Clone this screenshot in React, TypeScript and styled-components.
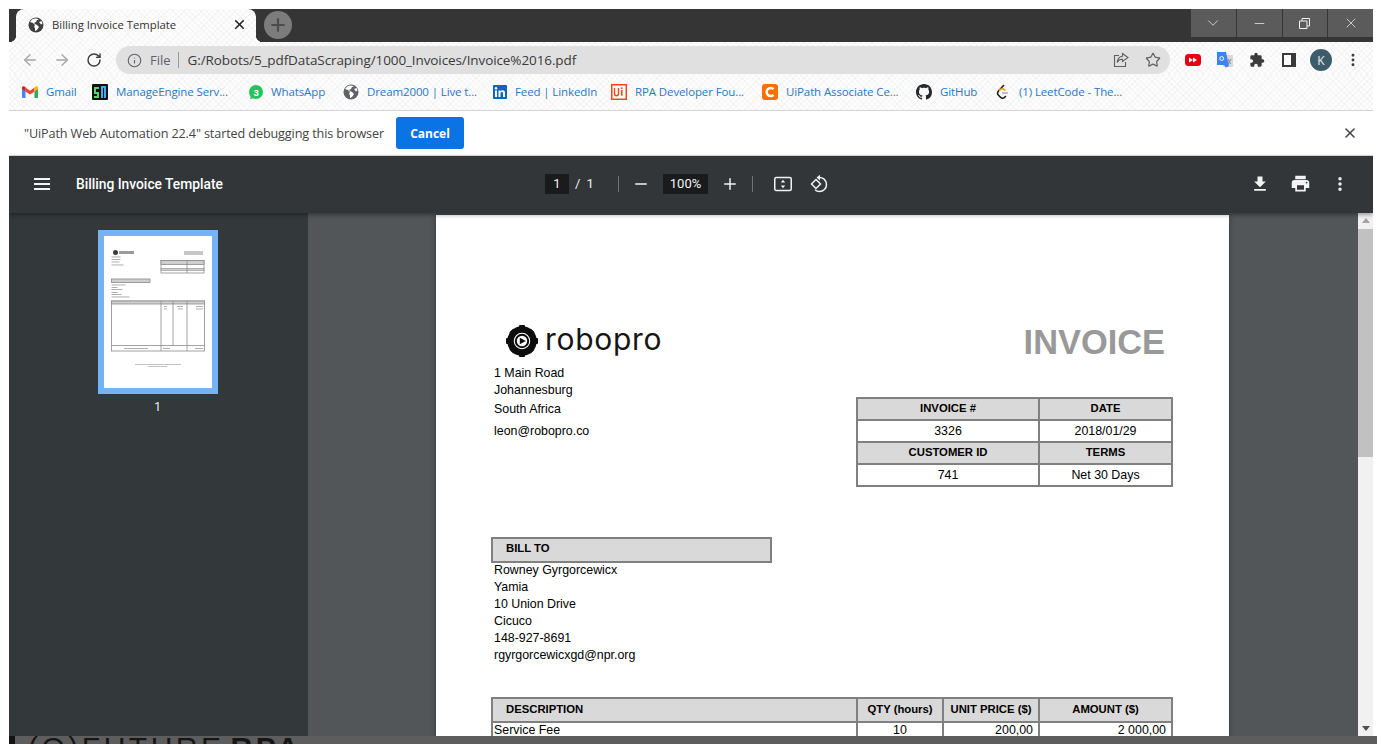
import React from 'react';
import styled, { createGlobalStyle, css } from 'styled-components';
import { ArrowLeft, ArrowRight, RotateCw, Info, Star, X, Plus, Minus, ChevronDown, MoreVertical } from 'lucide-react';

const UI_FONT = '"Open Sans", "Noto Sans", "Liberation Sans", sans-serif';
const DOC_FONT = '"Liberation Sans", Arial, sans-serif';

const GlobalStyle = createGlobalStyle`
  html, body {
    margin: 0;
    padding: 0;
    background: #ffffff;
    overflow: hidden;
  }
  * {
    box-sizing: border-box;
  }
  svg {
    flex: none;
  }
`;

// the browser theme has a very faint crosshatch behind the tab and toolbars
const themeTexture = css`
  background-color: #fdfdfd;
  background-image: repeating-linear-gradient(45deg, rgba(0, 0, 0, 0.028) 0 1px, transparent 1px 4px),
    repeating-linear-gradient(-45deg, rgba(0, 0, 0, 0.028) 0 1px, transparent 1px 4px);
`;

const Screen = styled.div`
  width: 1382px;
  height: 744px;
  background: #ffffff;
  display: flex;
  flex-direction: column;
  padding-top: 9px;
  overflow: hidden;
`;

const Browser = styled.div`
  height: 727px;
  flex: none;
  margin: 0 9px;
  display: flex;
  flex-direction: column;
  font-family: ${UI_FONT};
  overflow: hidden;
`;

const TabStrip = styled.div`
  height: 33px;
  flex: none;
  background: #353535;
  display: flex;
  padding-left: 7px;
`;

const Tab = styled.div`
  ${themeTexture}
  position: relative;
  width: 240px;
  height: 33px;
  border-radius: 8px 8px 0 0;
  display: flex;
  align-items: center;
  padding: 0 9px 2px 12px;
  gap: 8px;

  &::before,
  &::after {
    content: '';
    position: absolute;
    bottom: 0;
    width: 7px;
    height: 7px;
  }
  &::before {
    left: -7px;
    background: radial-gradient(circle at 0 0, #353535 7px, #ffffff 7.5px);
  }
  &::after {
    right: -7px;
    background: radial-gradient(circle at 100% 0, #353535 7px, #ffffff 7.5px);
  }
`;

const TabTitle = styled.span`
  flex: 1;
  font-size: 11.3px;
  color: #333333;
  white-space: nowrap;
`;

const NewTab = styled.div`
  width: 28px;
  height: 28px;
  margin: 2px 0 0 8px;
  border-radius: 50%;
  background: #7c7c7c;
  color: #4c4c4c;
  display: flex;
  align-items: center;
  justify-content: center;
`;

const WindowControls = styled.div`
  margin-left: auto;
  height: 28px;
  width: 182px;
  display: flex;
  gap: 1px;
`;

const WindowButton = styled.div`
  flex: 1;
  background: #5b5b5b;
  color: #f0f0f0;
  display: flex;
  align-items: center;
  justify-content: center;
`;

const Toolbar = styled.div`
  ${themeTexture}
  height: 32px;
  flex: none;
  display: flex;
  align-items: flex-end;
  padding-left: 5px;
`;

const NavButton = styled.div<{ $color: string }>`
  width: 32px;
  height: 28px;
  flex: none;
  color: ${(p) => p.$color};
  display: flex;
  align-items: center;
  justify-content: center;
`;

const Omnibox = styled.div`
  width: 1054px;
  height: 28px;
  margin-left: 6px;
  border-radius: 14px;
  background: #e0e0e0;
  display: flex;
  align-items: center;
  padding: 0 9px 0 11px;
`;

const FileLabel = styled.span`
  margin-left: 8px;
  padding-right: 7px;
  border-right: 1px solid #9a9a9a;
  font-size: 13px;
  line-height: 16px;
  color: #5f6368;
`;

const UrlText = styled.span`
  margin-left: 9px;
  font-size: 13.5px;
  letter-spacing: -0.1px;
  color: #3a3a3a;
  white-space: nowrap;
`;

const OmniActions = styled.div`
  margin-left: auto;
  display: flex;
  align-items: center;
  gap: 16px;
  color: #606060;
`;

const Extensions = styled.div`
  display: flex;
  align-items: center;
  height: 28px;
  padding-left: 7px;
`;

const ExtensionSlot = styled.div`
  width: 32px;
  display: flex;
  align-items: center;
  justify-content: center;
`;

const Avatar = styled.div`
  width: 22px;
  height: 22px;
  border-radius: 50%;
  background: #3b5c68;
  color: #e8eef0;
  font-size: 12px;
  display: flex;
  align-items: center;
  justify-content: center;
`;

const Bookmarks = styled.div`
  ${themeTexture}
  height: 37px;
  flex: none;
  border-bottom: 1px solid #d3d3d3;
  display: flex;
  align-items: center;
  padding: 0 0 1px 13px;
`;

const Bookmark = styled.div<{ $width: number }>`
  width: ${(p) => p.$width}px;
  flex: none;
  display: flex;
  align-items: center;
  gap: 8px;
  font-size: 11.5px;
  letter-spacing: -0.01em;
  color: #2b78bd;
  white-space: nowrap;
`;

const InfoBar = styled.div`
  height: 45px;
  flex: none;
  background: #ffffff;
  border-bottom: 1px solid #dcdcdc;
  display: flex;
  align-items: center;
  padding: 0 15px 0 15px;
`;

const InfoText = styled.span`
  font-size: 12.65px;
  color: #444444;
  letter-spacing: -0.01em;
  width: 372px;
  white-space: nowrap;
`;

const CancelButton = styled.button`
  width: 68px;
  height: 32px;
  border: none;
  border-radius: 3px;
  background: #0b74e5;
  color: #ffffff;
  font-family: ${UI_FONT};
  font-size: 12px;
  font-weight: 700;
  padding: 0;
`;

const InfoClose = styled.div`
  margin-left: auto;
  color: #444444;
  display: flex;
`;

const Viewer = styled.div`
  flex: 1;
  min-height: 0;
  display: flex;
  flex-direction: column;
  background: #525659;
`;

const PdfBar = styled.div`
  position: relative;
  z-index: 2;
  height: 57px;
  flex: none;
  background: #323639;
  box-shadow: 0 2px 4px rgba(0, 0, 0, 0.35);
  display: flex;
  align-items: center;
  padding-bottom: 2px;
  font-family: Roboto, ${UI_FONT};
  color: #f1f3f4;
`;

const PdfTitleBlock = styled.div`
  width: 536px;
  flex: none;
  display: flex;
  align-items: center;
  padding-left: 25px;
  gap: 26px;
`;

const PdfTitle = styled.span`
  font-size: 13.8px;
  font-weight: 500;
  color: #ffffff;
`;

const PdfControls = styled.div`
  display: flex;
  align-items: center;
  font-size: 13px;
`;

const PageInput = styled.div`
  width: 24px;
  height: 20px;
  background: #191b1c;
  display: flex;
  align-items: center;
  justify-content: center;
`;

const PageOf = styled.span`
  width: 49px;
  padding-left: 6px;
  word-spacing: 3px;
`;

const Divider = styled.span`
  width: 1px;
  height: 16px;
  background: #6f7376;
`;

const IconCell = styled.div<{ $width: number }>`
  width: ${(p) => p.$width}px;
  display: flex;
  align-items: center;
  justify-content: center;
`;

const ZoomValue = styled.div`
  width: 45px;
  height: 20px;
  background: #191b1c;
  display: flex;
  align-items: center;
  justify-content: center;
`;

const PdfRight = styled.div`
  margin-left: auto;
  display: flex;
  align-items: center;
  padding-right: 13px;
`;

const PdfBody = styled.div`
  flex: 1;
  min-height: 0;
  display: flex;
`;

const Sidebar = styled.div`
  width: 299px;
  flex: none;
  background: #33383b;
  display: flex;
  flex-direction: column;
  align-items: center;
  padding: 17px 0 0 0;
  font-family: Roboto, ${UI_FONT};
`;

const Thumb = styled.div`
  width: 120px;
  height: 164px;
  border: 6px solid #76b2f6;
  background: #ffffff;
  margin-right: 2px;
  display: flex;
`;

const ThumbLabel = styled.div`
  margin: 6px 2px 0 0;
  font-size: 12px;
  color: #eceff1;
`;

const PageArea = styled.div`
  flex: 1;
  min-width: 0;
  display: flex;
  justify-content: center;
  padding-top: 2px;
  overflow: hidden;
`;

const Page = styled.div`
  width: 793px;
  height: 1122px;
  flex: none;
  margin-left: -1px;
  background: #ffffff;
  box-shadow: 0 0 6px rgba(0, 0, 0, 0.3);
  padding: 110px 56px 0 55px;
  font-family: ${DOC_FONT};
  color: #000000;
`;

const DocTop = styled.div`
  display: flex;
  justify-content: space-between;
  align-items: flex-start;
  height: 40px;
  padding-left: 15px;
`;

const InvoiceTitle = styled.div`
  font-size: 34.4px;
  font-weight: 700;
  line-height: 34px;
  color: #999999;
  margin: 0 8px 0 0;
`;

const AddressRow = styled.div`
  display: flex;
  justify-content: space-between;
  height: 172px;
`;

const AddressBlock = styled.div`
  padding: 0 0 0 3px;
  font-size: 12.4px;
`;

const AddressLine = styled.div<{ $height: number }>`
  height: ${(p) => p.$height}px;
  line-height: 17px;
`;

const Table = styled.div<{ $columns: string; $top?: number }>`
  display: grid;
  grid-template-columns: ${(p) => p.$columns};
  border-top: 2px solid #808080;
  border-left: 2px solid #808080;
  align-self: flex-start;
  margin-top: ${(p) => p.$top || 0}px;
`;

const Cell = styled.div<{ $head?: boolean; $height: number; $align?: string }>`
  height: ${(p) => p.$height}px;
  background: ${(p) => (p.$head ? '#d9d9d9' : '#ffffff')};
  border-right: 2px solid #808080;
  border-bottom: 2px solid #808080;
  padding-bottom: ${(p) => (p.$head ? '2px' : '0')};
  font-size: ${(p) => (p.$head ? '11.3px' : '12.4px')};
  font-weight: ${(p) => (p.$head ? 700 : 400)};
  display: flex;
  align-items: center;
  justify-content: ${(p) => p.$align || 'center'};
  white-space: nowrap;
`;

const HeadLeft = styled.span`
  padding-left: 13px;
`;

const BillTo = styled.div`
  width: 281px;
  height: 26px;
  border: 2px solid #808080;
  background: #d9d9d9;
  font-size: 11.3px;
  font-weight: 700;
  display: flex;
  align-items: center;
  padding: 0 0 4px 13px;
`;

const BillLines = styled.div`
  margin-top: -1px;
  padding: 0 0 0 3px;
  font-size: 12.4px;
  height: 135px;
  line-height: 17px;
`;

const RowLabel = styled.span`
  padding-left: 1px;
  line-height: 14px;
`;

const RowAmount = styled.span`
  padding-right: 5px;
  line-height: 14px;
`;

const Scrollbar = styled.div`
  width: 15px;
  flex: none;
  background: #f1f1f1;
  display: flex;
  flex-direction: column;
  align-items: center;
  padding-top: 5px;
`;

const ScrollThumb = styled.div`
  width: 15px;
  height: 228px;
  margin-top: 6px;
  background: #c1c1c1;
`;

const ScrollArrow = styled.span<{ $down?: boolean }>`
  width: 0;
  height: 0;
  border-left: 4px solid transparent;
  border-right: 4px solid transparent;
  ${(p) => (p.$down ? 'border-top: 5px solid #505050; margin-top: auto; margin-bottom: 5px;' : 'border-bottom: 5px solid #a3a3a3;')}
`;

const DesktopStrip = styled.div`
  height: 8px;
  flex: none;
  margin: 0 5px 0 9px;
  background: #5d5d5d;
  border-left: 6px solid #141414;
  overflow: hidden;
  display: flex;
  padding-left: 13px;
  font-family: ${DOC_FONT};
  font-size: 30px;
  line-height: 30px;
  color: #161616;
  letter-spacing: 3.5px;
  white-space: nowrap;
`;

const DesktopBrand = styled.span`
  font-weight: 400;
  margin-right: 6px;
  margin-top: -3px;
`;

const DesktopBrandBold = styled.span`
  font-weight: 700;
  margin-top: -3px;
`;

const GlobeIcon = ({ color = '#5f6368', size = 16 }: { color?: string; size?: number }) => (
  <svg width={size} height={size} viewBox="0 0 16 16">
    <circle cx="8" cy="8" r="7.5" fill={color} />
    <path d="M2 5l3 1 2 2-1 2 1 1v3l2-1 2-3-2-2-2-1-1-1 2-1 1-2 2-.5C9 1 6 1 4 2.5z" fill="#ffffff" />
    <path d="M11 5l2.5-1 1 2.5-1.5 1z" fill="#ffffff" />
  </svg>
);

const ShareIcon = () => (
  <svg width="16" height="16" viewBox="0 0 16 16" fill="none" stroke="#606060" strokeWidth="1.1">
    <path d="M6 3.5H1.5v11h11V10" />
    <path d="M9.5 1.5l5.5 4-5.5 4V7.3C7 7.3 5.3 8.4 4.2 10.5 4.5 7 6.3 4.5 9.5 4.2z" />
  </svg>
);

const YoutubeExt = () => (
  <svg width="16" height="12" viewBox="0 0 16 12">
    <rect width="16" height="12" rx="3.5" fill="#e60012" />
    <path d="M4 3.5L8 6l-4 2.5zM8 3.5L12 6 8 8.5z" fill="#ffffff" />
  </svg>
);

const TranslateExt = () => (
  <svg width="16" height="16" viewBox="0 0 16 16">
    <rect x="6" y="3" width="10" height="12" fill="#d8d8d8" />
    <path d="M0 0h9l3 14-3 1.5L7 13H0z" fill="#3f83f1" />
    <circle cx="4.7" cy="6.5" r="1.9" fill="none" stroke="#ffffff" strokeWidth="1" />
    <path d="M11 7l2.5 5M14 7l-3 5" stroke="#7c8a92" strokeWidth="1" />
  </svg>
);

const PuzzleIcon = () => (
  <svg width="16" height="16" viewBox="0 0 24 24" fill="#3c3c3c">
    <path d="M20.5 11H19V7a2 2 0 0 0-2-2h-4V3.5a2.5 2.5 0 0 0-5 0V5H4a2 2 0 0 0-2 2v3.8h1.5a2.7 2.7 0 0 1 0 5.4H2V20a2 2 0 0 0 2 2h3.8v-1.5a2.7 2.7 0 0 1 5.4 0V22H17a2 2 0 0 0 2-2v-4h1.5a2.5 2.5 0 0 0 0-5z" />
  </svg>
);

const SidePanelIcon = () => (
  <svg width="14" height="14" viewBox="0 0 14 14">
    <path d="M0 0h14v14H0zM2 2v10h7V2z" fill="#3a3a3a" fillRule="evenodd" />
  </svg>
);

const GmailIcon = () => (
  <svg width="16" height="12" viewBox="0 0 16 12">
    <path d="M0 2v9a1 1 0 0 0 1 1h2.5V5.5z" fill="#4285f4" />
    <path d="M16 2v9a1 1 0 0 1-1 1h-2.5V5.5z" fill="#34a853" />
    <path d="M3.5 5.5L8 8.6l4.5-3.1V1.5L8 4.8 3.5 1.5z" fill="#ea4335" />
    <path d="M0 2c0-2 2.2-2.4 3.5-.5v4L0 3z" fill="#c5221f" />
    <path d="M16 2c0-2-2.2-2.4-3.5-.5v4L16 3z" fill="#fbbc04" />
  </svg>
);

const ManageEngineIcon = () => (
  <svg width="16" height="16" viewBox="0 0 16 16">
    <rect width="16" height="16" rx="1" fill="#111111" />
    <path d="M2 3h5v2H4v3h3v6H2v-2h3v-2H2z" fill="#57d36a" />
    <path d="M9 2h5v12h-2V4h-1v10H9z" fill="#3ea8f2" />
  </svg>
);

const WhatsAppBadge = () => (
  <svg width="14" height="14" viewBox="0 0 14 14">
    <circle cx="7" cy="7" r="7" fill="#25c35f" />
    <path d="M1 14l1-4 3 3z" fill="#25c35f" />
    <text x="7" y="10.5" textAnchor="middle" fontSize="9.5" fontWeight="700" fill="#ffffff" fontFamily="Liberation Sans">3</text>
  </svg>
);

const LinkedInIcon = () => (
  <svg width="14" height="14" viewBox="0 0 14 14">
    <rect width="14" height="14" rx="1" fill="#0a66c2" />
    <rect x="2" y="5.5" width="2" height="6.5" fill="#ffffff" />
    <circle cx="3" cy="3.3" r="1.2" fill="#ffffff" />
    <path d="M5.5 5.5h2v1c.5-.8 1.2-1.2 2.2-1.2 1.6 0 2.3 1 2.3 2.8V12h-2V8.6c0-.9-.3-1.5-1.1-1.5-.9 0-1.4.6-1.4 1.6V12h-2z" fill="#ffffff" />
  </svg>
);

const UiPathIcon = () => (
  <svg width="16" height="16" viewBox="0 0 16 16">
    <rect x="0.75" y="0.75" width="14.5" height="14.5" fill="#ffffff" stroke="#fa4616" strokeWidth="1.5" />
    <path d="M3.5 4v5.5c0 1.5.7 2.2 2 2.2s2-.7 2-2.2V4" fill="none" stroke="#fa4616" strokeWidth="1.4" />
    <rect x="10" y="6" width="1.6" height="5.7" fill="#fa4616" />
    <rect x="10" y="3.4" width="1.6" height="1.6" fill="#fa4616" />
  </svg>
);

const CourseIcon = () => (
  <svg width="16" height="16" viewBox="0 0 16 16">
    <rect width="16" height="16" rx="3" fill="#fa7000" />
    <path d="M11.5 5.2A4 4 0 1 0 11.5 10.8" fill="none" stroke="#ffffff" strokeWidth="2.4" />
  </svg>
);

const GithubIcon = () => (
  <svg width="16" height="16" viewBox="0 0 16 16">
    <path
      fill="#24292f"
      d="M8 0C3.58 0 0 3.58 0 8c0 3.54 2.29 6.53 5.47 7.59.4.07.55-.17.55-.38 0-.19-.01-.82-.01-1.49-2.01.37-2.53-.49-2.69-.94-.09-.23-.48-.94-.82-1.13-.28-.15-.68-.52-.01-.53.63-.01 1.08.58 1.23.82.72 1.21 1.87.87 2.33.66.07-.52.28-.87.51-1.07-1.78-.2-3.64-.89-3.64-3.95 0-.87.31-1.59.82-2.15-.08-.2-.36-1.02.08-2.12 0 0 .67-.21 2.2.82.64-.18 1.32-.27 2-.27s1.36.09 2 .27c1.53-1.04 2.2-.82 2.2-.82.44 1.1.16 1.92.08 2.12.51.56.82 1.27.82 2.15 0 3.07-1.87 3.75-3.65 3.95.29.25.54.73.54 1.48 0 1.07-.01 1.93-.01 2.2 0 .21.15.46.55.38A8.01 8.01 0 0 0 16 8c0-4.42-3.58-8-8-8z"
    />
  </svg>
);

const LeetCodeIcon = () => (
  <svg width="16" height="16" viewBox="0 0 16 16" fill="none">
    <path d="M9 1L3.5 7c-1.2 1.4-1.2 3 0 4.2l2 2c1.2 1.2 3 1.2 4.2 0l1.2-1.2" stroke="#1a1a1a" strokeWidth="1.6" />
    <path d="M4 6.5l2-1.4c1-.6 2-.6 3 .2l1.5 1.4" stroke="#f0a22e" strokeWidth="1.6" />
    <path d="M7 9h6" stroke="#b3b3b3" strokeWidth="1.6" />
  </svg>
);

const HamburgerIcon = () => (
  <svg width="16" height="12" viewBox="0 0 16 12" fill="#f1f3f4">
    <rect width="16" height="2" />
    <rect y="5" width="16" height="2" />
    <rect y="10" width="16" height="2" />
  </svg>
);

const FitIcon = () => (
  <svg width="20" height="16" viewBox="0 0 20 16" fill="none">
    <rect x="1.75" y="1.5" width="16.5" height="13" rx="1.5" stroke="#f1f3f4" strokeWidth="1.5" />
    <path d="M10 3.8l2.2 2.7H7.8zM10 12.2l2.2-2.7H7.8z" fill="#f1f3f4" />
  </svg>
);

const RotateIcon = () => (
  <svg width="20" height="20" viewBox="0 0 20 20" fill="none" stroke="#f1f3f4" strokeWidth="1.5">
    <path d="M7 5.5L11.5 10 7 14.5 2.5 10z" />
    <path d="M9.5 3.5c4.2-.5 8 2.4 8 7 0 4-3.2 7-7 7-1.8 0-3.3-.6-4.5-1.7" />
    <path d="M11 .8L7.5 3.6 11 6.4z" fill="#f1f3f4" stroke="none" />
  </svg>
);

const DownloadIcon = () => (
  <svg width="20" height="20" viewBox="0 0 24 24" fill="#f1f3f4">
    <path d="M5 20h14v-2H5v2zM19 9h-4V3H9v6H5l7 7 7-7z" />
  </svg>
);

const PrintIcon = () => (
  <svg width="21" height="21" viewBox="0 0 24 24" fill="#f1f3f4">
    <path d="M19 8H5c-1.66 0-3 1.34-3 3v6h4v4h12v-4h4v-6c0-1.66-1.34-3-3-3zm-3 11H8v-5h8v5zm3-7c-.55 0-1-.45-1-1s.45-1 1-1 1 .45 1 1-.45 1-1 1zm-1-9H6v4h12V3z" />
  </svg>
);

const RoboproLogo = () => (
  <svg width="170" height="36" viewBox="0 0 170 36" fill="none">
    <circle cx="16" cy="16" r="11.5" stroke="#0d0d0d" strokeWidth="6.5" />
    <g fill="#0d0d0d">
      <rect x="13" y="0" width="6" height="5" rx="1" />
      <rect x="13" y="27" width="6" height="5" rx="1" />
      <rect x="0" y="13" width="5" height="6" rx="1" />
      <rect x="27" y="13" width="5" height="6" rx="1" />
      <rect x="13" y="1" width="6" height="5" rx="1" transform="rotate(45 16 16)" />
      <rect x="13" y="26" width="6" height="5" rx="1" transform="rotate(45 16 16)" />
      <rect x="1" y="13" width="5" height="6" rx="1" transform="rotate(45 16 16)" />
      <rect x="26" y="13" width="5" height="6" rx="1" transform="rotate(45 16 16)" />
    </g>
    <circle cx="16" cy="16" r="6.2" fill="#ffffff" stroke="#0d0d0d" strokeWidth="2" />
    <path d="M13.8 12.8l6 3.2-6 3.2z" fill="#0d0d0d" />
    <text x="39" y="25" fontFamily='Inter, "Open Sans", sans-serif' fontSize="30" letterSpacing="0.7" fill="#151515">
      robopro
    </text>
  </svg>
);

// the thumbnail is just a scaled copy of the page, so it is drawn rather than laid out
const ThumbnailPage = () => {
  const line = '#8a8a8a';
  const textRows: [number, number, number][] = [
    [7.5, 20.5, 9], [7.5, 23, 9], [7.5, 25.5, 8], [7.5, 28.5, 12],
    [7.5, 48.5, 14], [7.5, 51, 6], [7.5, 53, 11], [7.5, 56, 6], [7.5, 58, 10], [7.5, 60.5, 18],
    [7.5, 70, 8], [7.5, 72.5, 17],
  ];
  return (
    <svg width="108" height="152" viewBox="0 0 108 152">
      <circle cx="11.5" cy="16.5" r="2.5" fill="#3a3a3a" />
      <rect x="15" y="15" width="15" height="3" fill="#9a9a9a" />
      <rect x="80" y="15" width="19" height="4" fill="#c6c6c6" />
      {textRows.map(([x, y, w]) => (
        <rect key={`${x}-${y}`} x={x} y={y} width={w} height="0.9" fill="#a6a6a6" />
      ))}
      <rect x="57" y="24.5" width="43" height="12.5" fill="#ffffff" stroke={line} strokeWidth="0.8" />
      <rect x="57" y="24.5" width="43" height="4" fill="#cfcfcf" stroke={line} strokeWidth="0.8" />
      <rect x="57" y="32.5" width="43" height="1.8" fill="#cfcfcf" stroke={line} strokeWidth="0.6" />
      <path d="M83 24.5V37" stroke={line} strokeWidth="0.8" />
      <rect x="7.5" y="43" width="38.5" height="3.6" fill="#cfcfcf" stroke={line} strokeWidth="0.8" />
      <rect x="7.5" y="65" width="93" height="50" fill="#ffffff" stroke={line} strokeWidth="0.8" />
      <rect x="7.5" y="65" width="93" height="3" fill="#cfcfcf" stroke={line} strokeWidth="0.8" />
      <path d="M57 65v50M69 65v44.5M83 65v50M7.5 109.5h93" stroke={line} strokeWidth="0.8" />
      <rect x="20" y="112" width="24" height="0.9" fill="#a6a6a6" />
      <rect x="59" y="112" width="7" height="0.9" fill="#a6a6a6" />
      <rect x="91" y="112" width="8" height="0.9" fill="#a6a6a6" />
      <rect x="60" y="70" width="3" height="0.9" fill="#a6a6a6" />
      <rect x="60" y="72.5" width="3" height="0.9" fill="#a6a6a6" />
      <rect x="73" y="70" width="6" height="0.9" fill="#a6a6a6" />
      <rect x="74" y="72.5" width="5" height="0.9" fill="#a6a6a6" />
      <rect x="92" y="70" width="7" height="0.9" fill="#a6a6a6" />
      <rect x="92" y="72.5" width="7" height="0.9" fill="#a6a6a6" />
      <rect x="31" y="128" width="46" height="0.8" fill="#b5b5b5" />
      <rect x="44" y="130" width="19" height="0.8" fill="#b5b5b5" />
    </svg>
  );
};

const BOOKMARKS = [
  { label: 'Gmail', width: 70, icon: <GmailIcon /> },
  { label: 'ManageEngine Serv...', width: 157, icon: <ManageEngineIcon /> },
  { label: 'WhatsApp', width: 94, icon: <WhatsAppBadge /> },
  { label: 'Dream2000 | Live t...', width: 150, icon: <GlobeIcon /> },
  { label: 'Feed | LinkedIn', width: 118, icon: <LinkedInIcon /> },
  { label: 'RPA Developer Fou...', width: 151, icon: <UiPathIcon /> },
  { label: 'UiPath Associate Ce...', width: 154, icon: <CourseIcon /> },
  { label: 'GitHub', width: 79, icon: <GithubIcon /> },
  { label: '(1) LeetCode - The...', width: 140, icon: <LeetCodeIcon /> },
];

const TOP_COLUMNS = '182px 133px';
const ITEM_COLUMNS = '365px 86px 96px 133px';

const App: React.FC = () => {
  return (
    <Screen>
      <GlobalStyle />
      <Browser>
        <TabStrip>
          <Tab>
            <GlobeIcon color="#3f3f3f" />
            <TabTitle>Billing Invoice Template</TabTitle>
            <X size={15} color="#222222" strokeWidth={2.6} />
          </Tab>
          <NewTab>
            <Plus size={20} strokeWidth={2.6} />
          </NewTab>
          <WindowControls>
            <WindowButton>
              <ChevronDown size={18} strokeWidth={1} />
            </WindowButton>
            <WindowButton>
              <Minus size={15} strokeWidth={1.2} />
            </WindowButton>
            <WindowButton>
              <svg width="11" height="11" viewBox="0 0 11 11" fill="none" stroke="#f0f0f0">
                <path d="M.5 3h7.5v7.5H.5zM3 3V.5h7.5V8H8" />
              </svg>
            </WindowButton>
            <WindowButton>
              <X size={16} strokeWidth={1.1} />
            </WindowButton>
          </WindowControls>
        </TabStrip>

        <Toolbar>
          <NavButton $color="#a6a6a6">
            <ArrowLeft size={18} strokeWidth={1.8} />
          </NavButton>
          <NavButton $color="#a6a6a6">
            <ArrowRight size={18} strokeWidth={1.8} />
          </NavButton>
          <NavButton $color="#3f3f3f">
            <RotateCw size={16} strokeWidth={2.2} />
          </NavButton>
          <Omnibox>
            <Info size={15} color="#5f6368" strokeWidth={1.8} />
            <FileLabel>File</FileLabel>
            <UrlText>G:/Robots/5_pdfDataScraping/1000_Invoices/Invoice%2016.pdf</UrlText>
            <OmniActions>
              <ShareIcon />
              <Star size={16} strokeWidth={1.8} />
            </OmniActions>
          </Omnibox>
          <Extensions>
            <ExtensionSlot>
              <YoutubeExt />
            </ExtensionSlot>
            <ExtensionSlot>
              <TranslateExt />
            </ExtensionSlot>
            <ExtensionSlot>
              <PuzzleIcon />
            </ExtensionSlot>
            <ExtensionSlot>
              <SidePanelIcon />
            </ExtensionSlot>
            <ExtensionSlot>
              <Avatar>K</Avatar>
            </ExtensionSlot>
            <ExtensionSlot>
              <MoreVertical size={16} color="#3c3c3c" strokeWidth={2.4} />
            </ExtensionSlot>
          </Extensions>
        </Toolbar>

        <Bookmarks>
          {BOOKMARKS.map((b) => (
            <Bookmark key={b.label} $width={b.width}>
              {b.icon}
              <span>{b.label}</span>
            </Bookmark>
          ))}
        </Bookmarks>

        <InfoBar>
          <InfoText>"UiPath Web Automation 22.4" started debugging this browser</InfoText>
          <CancelButton>Cancel</CancelButton>
          <InfoClose>
            <X size={16} strokeWidth={2.4} />
          </InfoClose>
        </InfoBar>

        <Viewer>
          <PdfBar>
            <PdfTitleBlock>
              <HamburgerIcon />
              <PdfTitle>Billing Invoice Template</PdfTitle>
            </PdfTitleBlock>
            <PdfControls>
              <PageInput>1</PageInput>
              <PageOf>/ 1</PageOf>
              <Divider />
              <IconCell $width={44}>
                <Minus size={18} strokeWidth={2} />
              </IconCell>
              <ZoomValue>100%</ZoomValue>
              <IconCell $width={44}>
                <Plus size={18} strokeWidth={2} />
              </IconCell>
              <Divider />
              <IconCell $width={60}>
                <FitIcon />
              </IconCell>
              <IconCell $width={12}>
                <RotateIcon />
              </IconCell>
            </PdfControls>
            <PdfRight>
              <IconCell $width={40}>
                <DownloadIcon />
              </IconCell>
              <IconCell $width={40}>
                <PrintIcon />
              </IconCell>
              <IconCell $width={40}>
                <MoreVertical size={18} strokeWidth={2.6} />
              </IconCell>
            </PdfRight>
          </PdfBar>
          <PdfBody>
            <Sidebar>
              <Thumb>
                <ThumbnailPage />
              </Thumb>
              <ThumbLabel>1</ThumbLabel>
            </Sidebar>
            <PageArea>
              <Page>
                <DocTop>
                  <RoboproLogo />
                  <InvoiceTitle>INVOICE</InvoiceTitle>
                </DocTop>
                <AddressRow>
                  <AddressBlock>
                    <AddressLine $height={17}>1 Main Road</AddressLine>
                    <AddressLine $height={19}>Johannesburg</AddressLine>
                    <AddressLine $height={22}>South Africa</AddressLine>
                    <AddressLine $height={17}>leon@robopro.co</AddressLine>
                  </AddressBlock>
                  <Table $columns={TOP_COLUMNS} $top={32}>
                    <Cell $head $height={22}>INVOICE #</Cell>
                    <Cell $head $height={22}>DATE</Cell>
                    <Cell $height={22}>3326</Cell>
                    <Cell $height={22}>2018/01/29</Cell>
                    <Cell $head $height={22}>CUSTOMER ID</Cell>
                    <Cell $head $height={22}>TERMS</Cell>
                    <Cell $height={22}>741</Cell>
                    <Cell $height={22}>Net 30 Days</Cell>
                  </Table>
                </AddressRow>
                <BillTo>BILL TO</BillTo>
                <BillLines>
                  <div>Rowney Gyrgorcewicx</div>
                  <div>Yamia</div>
                  <div>10 Union Drive</div>
                  <div>Cicuco</div>
                  <div>148-927-8691</div>
                  <div>rgyrgorcewicxgd@npr.org</div>
                </BillLines>
                <Table $columns={ITEM_COLUMNS}>
                  <Cell $head $height={24} $align="flex-start">
                    <HeadLeft>DESCRIPTION</HeadLeft>
                  </Cell>
                  <Cell $head $height={24}>QTY (hours)</Cell>
                  <Cell $head $height={24}>UNIT PRICE ($)</Cell>
                  <Cell $head $height={24}>AMOUNT ($)</Cell>
                  <Cell $height={16} $align="flex-start">
                    <RowLabel>Service Fee</RowLabel>
                  </Cell>
                  <Cell $height={16}>10</Cell>
                  <Cell $height={16} $align="flex-end">
                    <RowAmount>200,00</RowAmount>
                  </Cell>
                  <Cell $height={16} $align="flex-end">
                    <RowAmount>2 000,00</RowAmount>
                  </Cell>
                </Table>
              </Page>
            </PageArea>
            <Scrollbar>
              <ScrollArrow />
              <ScrollThumb />
              <ScrollArrow $down />
            </Scrollbar>
          </PdfBody>
        </Viewer>
      </Browser>
      <DesktopStrip>
        <DesktopBrand>(O)FUTURE</DesktopBrand>
        <DesktopBrandBold>RPA</DesktopBrandBold>
      </DesktopStrip>
    </Screen>
  );
};

export default App;
